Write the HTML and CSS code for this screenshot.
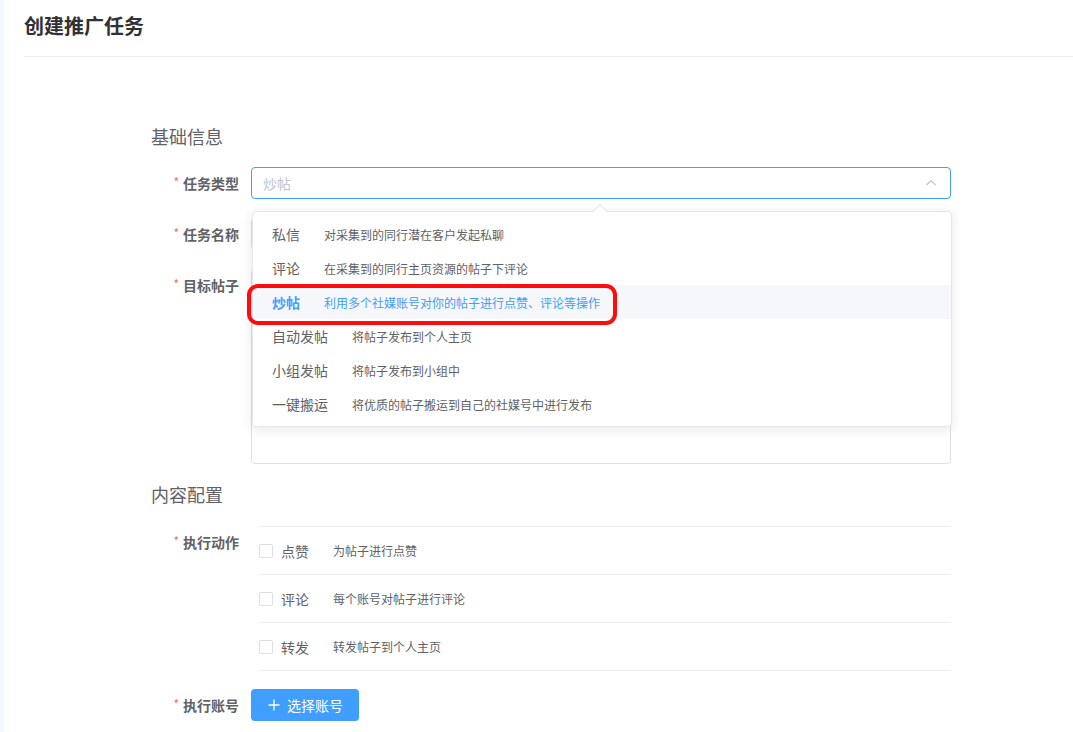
FILE: index.html
```html
<!DOCTYPE html>
<html lang="zh-CN">
<head>
<meta charset="utf-8">
<title>创建推广任务</title>
<link rel="stylesheet" href="styles.css">
</head>
<body>
<div class="app">
  <div class="side"></div>
  <div class="main">
    <div class="page-header"><h1 class="page-title">创建推广任务</h1></div>
    <div class="form">
      <div class="section-title first">基础信息</div>

      <div class="form-item">
        <label class="form-label"><span class="req">*</span>任务类型</label>
        <div class="form-content">
          <div class="select">
            <span class="placeholder">炒帖</span>
            <svg class="chev" width="12" height="12" viewBox="0 0 12 12"><path d="M1.5 8 L6 3.5 L10.5 8" fill="none" stroke="#c0c4cc" stroke-width="1.2"/></svg>
          </div>
          <div class="dropdown">
            <div class="arrow"></div>
            <ul class="options">
              <li class="option"><span class="opt-name">私信</span><span class="opt-desc">对采集到的同行潜在客户发起私聊</span></li>
              <li class="option"><span class="opt-name">评论</span><span class="opt-desc">在采集到的同行主页资源的帖子下评论</span></li>
              <li class="option active"><span class="opt-name">炒帖</span><span class="opt-desc">利用多个社媒账号对你的帖子进行点赞、评论等操作</span></li>
              <li class="option"><span class="opt-name">自动发帖</span><span class="opt-desc">将帖子发布到个人主页</span></li>
              <li class="option"><span class="opt-name">小组发帖</span><span class="opt-desc">将帖子发布到小组中</span></li>
              <li class="option"><span class="opt-name">一键搬运</span><span class="opt-desc">将优质的帖子搬运到自己的社媒号中进行发布</span></li>
            </ul>
            <div class="mark"></div>
          </div>
        </div>
      </div>

      <div class="form-item">
        <label class="form-label"><span class="req">*</span>任务名称</label>
        <div class="form-content"><div class="input"></div></div>
      </div>

      <div class="form-item">
        <label class="form-label"><span class="req">*</span>目标帖子</label>
        <div class="form-content"><div class="textarea"></div></div>
      </div>

      <div class="section-title">内容配置</div>

      <div class="form-item">
        <label class="form-label"><span class="req">*</span>执行动作</label>
        <div class="form-content">
          <ul class="actions">
            <li class="action"><span class="checkbox"></span><span class="act-name">点赞</span><span class="act-desc">为帖子进行点赞</span></li>
            <li class="action"><span class="checkbox"></span><span class="act-name">评论</span><span class="act-desc">每个账号对帖子进行评论</span></li>
            <li class="action"><span class="checkbox"></span><span class="act-name">转发</span><span class="act-desc">转发帖子到个人主页</span></li>
          </ul>
        </div>
      </div>

      <div class="form-item">
        <label class="form-label"><span class="req">*</span>执行账号</label>
        <div class="form-content">
          <button class="btn-primary"><svg width="12" height="12" viewBox="0 0 12 12"><path d="M6 0.5 V11.5 M0.5 6 H11.5" stroke="#fff" stroke-width="1.3" fill="none"/></svg>选择账号</button>
        </div>
      </div>
    </div>
  </div>
</div>
</body>
</html>
```

FILE: styles.css
```css
* { box-sizing: border-box; }
html, body { margin: 0; padding: 0; background: #fff; }
body {
  font-family: "Noto Sans CJK SC", "Noto Sans", "Liberation Sans", sans-serif;
  color: #606266;
  font-size: 14px;
  overflow: hidden;
}
ul { list-style: none; margin: 0; padding: 0; }

.app { display: flex; min-height: 732px; }
.side { width: 4px; background: #f2f9ff; flex: none; }
.main { flex: 1; padding-left: 20px; }

.page-header {
  height: 57px;
  border-bottom: 1px solid #ebeef5;
  padding-top: 12px;
}
.page-title {
  margin: 0;
  font-size: 20px;
  line-height: 28px;
  font-weight: 700;
  color: #303133;
}

.form { margin-left: 127px; width: 800px; }

.section-title {
  font-size: 18px;
  line-height: 24px;
  color: #606266;
  margin: 0 0 20px;
}
.section-title.first { margin-top: 67px; margin-bottom: 19px; }

.form-item { display: flex; margin-bottom: 18px; }
.form-label {
  width: 100px;
  flex: none;
  text-align: right;
  padding-right: 12px;
  line-height: 32px;
  font-size: 14px;
  font-weight: 700;
  color: #606266;
}
.req { color: #f56c6c; margin-right: 4px; font-weight: 400; font-size: 12px; position: relative; top: -2px; }
.form-content { width: 700px; position: relative; }

.select {
  height: 32px;
  border: 1px solid #409eff;
  border-radius: 4px;
  display: flex;
  align-items: center;
  justify-content: space-between;
  padding: 0 13px 0 11px;
}
.placeholder { color: #c0c4cc; font-size: 14px; }

.input {
  height: 32px;
  border: 1px solid #dcdfe6;
  border-radius: 4px;
}
.textarea {
  height: 195px;
  border: 1px solid #dcdfe6;
  border-radius: 4px;
}

.dropdown {
  position: absolute;
  top: 44px;
  left: 1px;
  width: 700px;
  background: #fff;
  border: 1px solid #e4e7ed;
  border-radius: 4px;
  box-shadow: 0 2px 12px 0 rgba(0, 0, 0, 0.1);
  z-index: 10;
  padding: 5px 0;
}
.arrow {
  position: absolute;
  top: -6px;
  left: 342px;
  width: 10px;
  height: 10px;
  background: #fff;
  border-left: 1px solid #e4e7ed;
  border-top: 1px solid #e4e7ed;
  transform: rotate(45deg);
}
.option {
  height: 34px;
  display: flex;
  align-items: center;
  padding-left: 19px;
  color: #606266;
}
.opt-name { font-size: 14px; margin-right: 24px; }
.opt-desc { font-size: 12px; }
.option.active { background: #f5f7fa; color: #409eff; }
.option.active .opt-name { font-weight: 700; }

.mark {
  position: absolute;
  left: -6px;
  top: 72px;
  width: 370px;
  height: 41px;
  border: 4px solid #ff0c0c;
  border-radius: 11px;
}

.actions { margin-left: 8px; border-top: 1px solid #ebeef5; }
.action {
  height: 48px;
  border-bottom: 1px solid #ebeef5;
  display: flex;
  align-items: center;
}
.checkbox {
  width: 14px;
  height: 14px;
  border: 1px solid #dcdfe6;
  border-radius: 2px;
  margin-right: 8px;
  flex: none;
}
.act-name { font-size: 14px; color: #606266; margin-right: 24px; }
.act-desc { font-size: 12px; color: #606266; }

.btn-primary {
  height: 32px;
  width: 108px;
  background: #409eff;
  border: none;
  border-radius: 4px;
  color: #fff;
  font-family: inherit;
  font-size: 14px;
  display: flex;
  align-items: center;
  padding: 0 0 0 17px;
}
.btn-primary svg { margin-right: 7px; }
```
